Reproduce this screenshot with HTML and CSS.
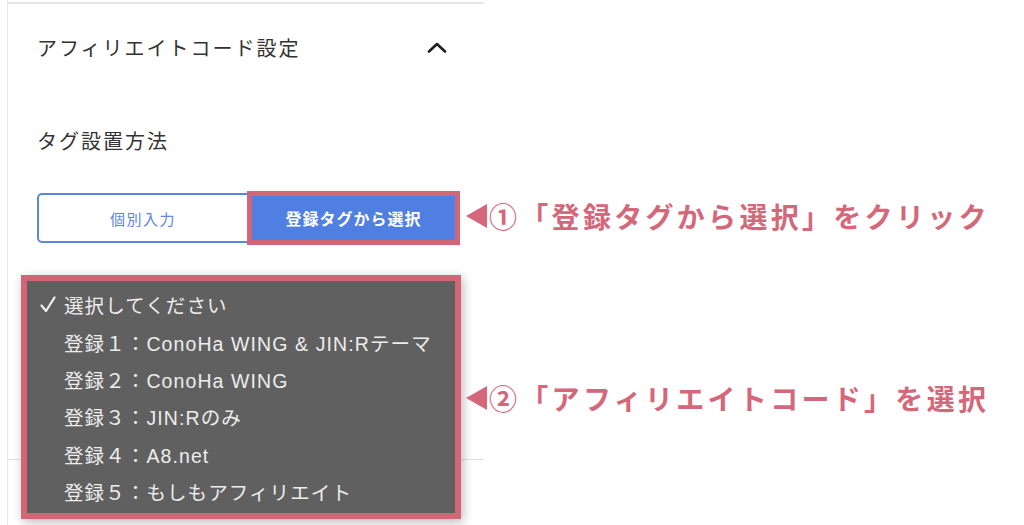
FILE: index.html
```html
<!DOCTYPE html>
<html lang="ja">
<head>
  <meta charset="UTF-8">
  <meta name="viewport" content="width=device-width, initial-scale=1.0">
  <title>アフィリエイトコード設定</title>
  <link rel="stylesheet" href="styles.css">
</head>
<body>
  <div class="panel">
    <div class="section">
      <div class="section-head">
        <h2 class="section-title">アフィリエイトコード設定</h2>
        <svg class="chevron" width="20" height="12" viewBox="0 0 20 12">
          <polyline points="2,10.5 10,3 18,10.5" fill="none" stroke="#1e1e1e" stroke-width="2.6" stroke-linecap="round" stroke-linejoin="round"/>
        </svg>
      </div>
      <p class="field-label">タグ設置方法</p>
      <div class="btn-group">
        <a href="javascript:;" class="btn btn-outline">個別入力</a>
        <a href="javascript:;" class="btn btn-primary">登録タグから選択</a>
      </div>
    </div>
  </div>

  <!-- プルダウン -->
  <ul class="menu">
    <li class="menu-item is-checked">
      <svg class="check" width="16" height="17" viewBox="0 0 16 17"><polyline points="1.5,9.5 6,15 14.5,1.5" fill="none" stroke="#f0f0f0" stroke-width="2.2" stroke-linecap="round" stroke-linejoin="round"/></svg>選択してください
    </li>
    <li class="menu-item">登録１：ConoHa WING &amp; JIN:Rテーマ</li>
    <li class="menu-item">登録２：ConoHa WING</li>
    <li class="menu-item">登録３：JIN:Rのみ</li>
    <li class="menu-item">登録４：A8.net</li>
    <li class="menu-item">登録５：もしもアフィリエイト</li>
  </ul>

  <!-- 注釈 -->
  <div class="note note-1">
    <svg class="note-arrow" width="21" height="24" viewBox="0 0 21 24"><polygon points="0,12 21,0 21,24" fill="#d4687a"/></svg>
    <span>①「登録タグから選択」をクリック</span>
  </div>
  <div class="note note-2">
    <svg class="note-arrow" width="21" height="24" viewBox="0 0 21 24"><polygon points="0,12 21,0 21,24" fill="#d4687a"/></svg>
    <span>②「アフィリエイトコード」を選択</span>
  </div>
</body>
</html>
```

FILE: styles.css
```css
* {
  margin: 0;
  padding: 0;
  list-style-type: none;
  text-decoration: none;
  box-sizing: border-box;
}
body {
  position: relative;
  width: 1024px;
  height: 525px;
  overflow: hidden;
  background: #fff;
  font-family: "Noto Sans CJK JP", "Noto Sans", sans-serif;
  color: #333;
}
.panel {
  margin-left: 7px;
  width: 477px;
  height: 525px;
  border-left: 1px solid #e8e8e8;
  padding-top: 2px;
}
.section {
  height: 458px;
  border-top: 2px solid #e6e6e6;
  border-bottom: 1px solid #e2e2e2;
  padding: 0 37px 0 29px;
}
.section-head {
  display: flex;
  align-items: center;
  justify-content: space-between;
  height: 86px;
}
.section-title {
  font-size: 20px;
  font-weight: 400;
  letter-spacing: 2px;
  color: #333;
}
.field-label {
  margin-top: 36px;
  font-size: 20px;
  line-height: 30px;
  letter-spacing: 2px;
  color: #333;
}
.btn-group {
  display: flex;
  margin-top: 37px;
}
.btn {
  display: flex;
  flex-shrink: 0;
  align-items: center;
  justify-content: center;
  height: 50px;
  font-size: 15px;
  letter-spacing: 1.5px;
}
.btn-outline {
  width: 212px;
  border: 2px solid #5d86e2;
  border-radius: 5px 0 0 5px;
  color: #5d86e2;
}
.btn-primary {
  width: 209px;
  background: #4f7fe1;
  color: #fff;
  font-size: 16px;
  font-weight: 700;
  letter-spacing: 1px;
  outline: 5px solid #d26677;
  outline-offset: -3px;
}
.menu {
  position: absolute;
  left: 21px;
  top: 275px;
  width: 440px;
  height: 244px;
  padding: 5px 0 2px;
  background: #606060;
  border: 6px solid #d26677;
  box-shadow: 2px 3px 10px rgba(0, 0, 0, 0.28);
}
.menu-item {
  display: flex;
  align-items: center;
  height: 37.4px;
  padding-left: 37px;
  font-family: "Liberation Sans", "Noto Sans CJK JP", sans-serif;
  font-size: 19.5px;
  letter-spacing: 1.1px;
  color: #ededed;
  white-space: nowrap;
}
.menu-item.is-checked {
  padding-left: 13px;
}
.check {
  margin-right: 8px;
}
.note {
  position: absolute;
  left: 466px;
  display: flex;
  align-items: center;
  gap: 2px;
  height: 40px;
  font-size: 28px;
  font-weight: 700;
  letter-spacing: 3.3px;
  color: #d4687a;
  white-space: nowrap;
}
.note-1 {
  top: 196px;
}
.note-2 {
  top: 378px;
}
```
